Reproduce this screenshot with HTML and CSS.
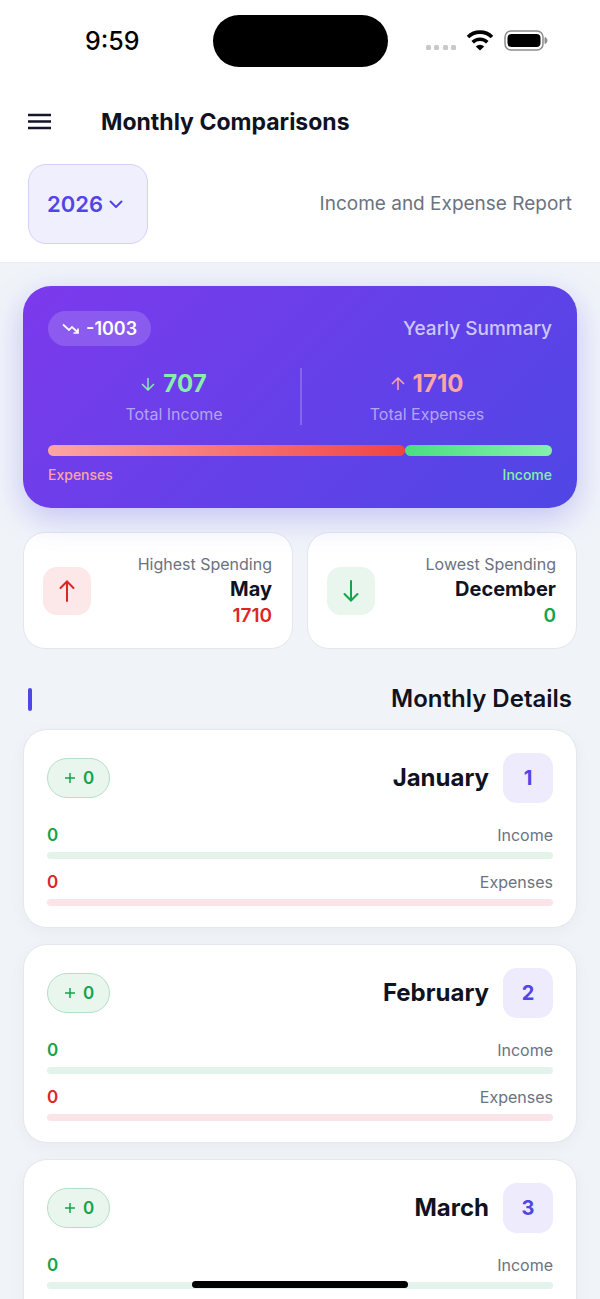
FILE: index.html
```html
<!DOCTYPE html>
<html lang="en">
<head>
<meta charset="utf-8">
<meta name="viewport" content="width=device-width, initial-scale=1">
<title>Monthly Comparisons</title>
<link rel="stylesheet" href="styles.css">
</head>
<body>
<div class="app">
	<div class="status">
		<div class="time">9:59</div>
		<div class="island"></div>
		<div class="signals">
			<svg width="31" height="26" viewBox="0 0 31 26"><g fill="#c8c8c8"><rect x="1" y="17" width="5" height="5" rx="1.500"/><rect x="9" y="17" width="5" height="5" rx="1.500"/><rect x="18" y="17" width="5" height="5" rx="1.500"/><rect x="26" y="17" width="5" height="5" rx="1.500"/></g></svg>
			<svg width="28" height="26" viewBox="0 0 28 26"><g fill="none" stroke="#000" stroke-width="3.6"><path d="M2 9.100a17 17 0 0 1 24 0"/><path d="M6.700 14.200a10.400 10.400 0 0 1 14.600 0"/></g><path d="M14 22.600l-4.200-4.200a6 6 0 0 1 8.400 0z"/></svg>
			<svg width="44" height="26" viewBox="0 0 44 26"><rect x="1" y="3" width="38" height="19" rx="6" fill="none" stroke="#8a8a8a" stroke-width="1.500"/><rect x="3.500" y="6" width="33" height="13" rx="4"/><path d="M41 9.500c2.600 1 2.600 5 0 6z" fill="#8a8a8a" stroke="#8a8a8a"/></svg>
		</div>
	</div>
	<header class="header">
		<div class="titlebar">
			<button class="menu" type="button" aria-label="Menu">
				<svg width="24" height="18" viewBox="0 0 24 18"><path d="M0 2h23M0 8.500h23M0 15h23" stroke="#15152b" stroke-width="2.300"/></svg>
			</button>
			<h1>Monthly Comparisons</h1>
		</div>
		<div class="filter">
			<div class="year">
				<select aria-label="Year">
					<option>2026</option>
				</select>
				<svg class="chevron" width="14" height="9" viewBox="0 0 14 9"><path d="M1.500 1.500L7 7l5.500-5.500" fill="none" stroke="#4f46e5" stroke-width="2" stroke-linecap="round" stroke-linejoin="round"/></svg>
			</div>
			<p>Income and Expense Report</p>
		</div>
	</header>

	<main class="content">
		<section class="summary">
			<div class="summary-top">
				<div class="balance">
					<svg width="18" height="12" viewBox="0 0 18 12"><path d="M1 1.500l6 5.500 3-3 6 5.500M16 5.500v4.500h-4.500" fill="none" stroke="#fff" stroke-width="1.700"/></svg>
					-1003
				</div>
				<h2>Yearly Summary</h2>
			</div>
			<div class="totals">
				<div class="total income">
					<div class="value">
						<svg width="14" height="14" viewBox="0 0 14 14"><path d="M7 1v12M1 7l6 6 6-6" fill="none" stroke="currentColor" stroke-width="1.500"/></svg>
						707
					</div>
					<div class="name">Total Income</div>
				</div>
				<div class="total expense">
					<div class="value">
						<svg width="14" height="14" viewBox="0 0 14 14"><path d="M7 13V1M1 7l6-6 6 6" fill="none" stroke="currentColor" stroke-width="1.500"/></svg>
						1710
					</div>
					<div class="name">Total Expenses</div>
				</div>
			</div>
			<div class="ratio">
				<div class="ratio-expense" style="width:70.75%"></div>
				<div class="ratio-income"></div>
			</div>
			<div class="legend">
				<span class="expense">Expenses</span>
				<span class="income">Income</span>
			</div>
		</section>

		<section class="extremes">
			<div class="extreme">
				<div class="icon red">
					<svg width="16" height="22" viewBox="0 0 16 22"><path d="M8 21V2M1.500 8L8 1.500 14.500 8" fill="none" stroke="#dc2626" stroke-width="2" stroke-linecap="round"/></svg>
				</div>
				<div class="info">
					<div class="label">Highest Spending</div>
					<div class="month">May</div>
					<div class="amount minus">1710</div>
				</div>
			</div>
			<div class="extreme">
				<div class="icon green">
					<svg width="16" height="22" viewBox="0 0 16 22"><path d="M8 1v19M1.500 14L8 20.500 14.500 14" fill="none" stroke="#16a34a" stroke-width="2" stroke-linecap="round"/></svg>
				</div>
				<div class="info">
					<div class="label">Lowest Spending</div>
					<div class="month">December</div>
					<div class="amount plus">0</div>
				</div>
			</div>
		</section>

		<div class="heading">
			<span class="mark"></span>
			<h2>Monthly Details</h2>
		</div>

		<section class="months">
			<article class="card">
				<div class="card-top">
					<div class="net">
						<svg width="10" height="10" viewBox="0 0 10 10"><path d="M5 0v10M0 5h10" stroke="#16a34a" stroke-width="1.500"/></svg>
						0
					</div>
					<h3>January</h3>
					<div class="number">1</div>
				</div>
				<div class="line"><b class="plus">0</b><span>Income</span></div>
				<div class="track green"></div>
				<div class="line"><b class="minus">0</b><span>Expenses</span></div>
				<div class="track red"></div>
			</article>
			<article class="card">
				<div class="card-top">
					<div class="net">
						<svg width="10" height="10" viewBox="0 0 10 10"><path d="M5 0v10M0 5h10" stroke="#16a34a" stroke-width="1.500"/></svg>
						0
					</div>
					<h3>February</h3>
					<div class="number">2</div>
				</div>
				<div class="line"><b class="plus">0</b><span>Income</span></div>
				<div class="track green"></div>
				<div class="line"><b class="minus">0</b><span>Expenses</span></div>
				<div class="track red"></div>
			</article>
			<article class="card">
				<div class="card-top">
					<div class="net">
						<svg width="10" height="10" viewBox="0 0 10 10"><path d="M5 0v10M0 5h10" stroke="#16a34a" stroke-width="1.500"/></svg>
						0
					</div>
					<h3>March</h3>
					<div class="number">3</div>
				</div>
				<div class="line"><b class="plus">0</b><span>Income</span></div>
				<div class="track green"></div>
				<div class="line"><b class="minus">0</b><span>Expenses</span></div>
				<div class="track red"></div>
			</article>
		</section>
	</main>
	<div class="home"></div>
</div>
</body>
</html>
```

FILE: styles.css
```css
*{margin:0;padding:0;box-sizing:border-box;}
body{font-family:Inter,"Liberation Sans",sans-serif;font-size:16px;color:#10121f;background:#f0f4f9;}
svg{display:block;flex:none;}
.app{height:100vh;display:flex;flex-direction:column;overflow:hidden;}

/* status bar */
.status{display:grid;grid-template-columns:1fr 175px 1fr;align-items:center;height:82px;background:#fff;flex:none;}
.time{font-size:25px;line-height:30px;font-weight:500;color:#000;text-align:center;padding-left:12px;}
.island{height:52px;border-radius:26px;background:#000;}
.signals{display:flex;justify-content:flex-end;gap:10px;padding-right:52px;}

/* header */
.header{background:#fff;border-bottom:1px solid #e8ebf0;flex:none;position:relative;z-index:2;}
.titlebar{display:flex;align-items:center;gap:49px;height:80px;padding:0 28px;}
.menu{border:0;background:none;cursor:pointer;}
h1{font-size:23px;line-height:30px;font-weight:700;}
.filter{display:flex;justify-content:space-between;align-items:center;padding:2px 28px 18px;}
.filter p{font-size:19px;line-height:24px;color:#6b7280;}
.year{position:relative;}
.year select{appearance:none;width:120px;height:80px;padding:0 40px 0 18px;border:1px solid #d6d0f5;border-radius:18px;background:#f0effe;font-family:inherit;font-size:22px;font-weight:600;color:#4f46e5;cursor:pointer;}
.chevron{position:absolute;right:25px;top:36px;pointer-events:none;}

.content{flex:1;min-height:0;overflow-y:auto;scrollbar-width:none;padding:23px;}

/* yearly summary */
.summary{position:relative;z-index:1;padding:25px 25px 22px;border-radius:28px;background:linear-gradient(135deg,#7c3aed,#4f46e5);box-shadow:0 10px 32px rgba(79,70,229,.28);}
.summary-top{display:flex;justify-content:space-between;align-items:center;}
.summary h2{font-size:19px;line-height:24px;font-weight:500;color:#cdc7f8;}
.balance{display:flex;align-items:center;gap:6px;height:35px;padding:0 14px;border-radius:18px;background:rgba(255,255,255,.16);font-size:18px;font-weight:600;color:#fff;}
.totals{display:grid;grid-template-columns:1fr 1fr;margin:22px 0 20px;text-align:center;}
.total + .total{border-left:2px solid rgba(255,255,255,.2);}
.value{display:flex;justify-content:center;align-items:center;gap:8px;font-size:24px;line-height:32px;font-weight:700;}
.name{margin-top:4px;font-size:16px;line-height:21px;color:#b3a5f3;}
.income{color:#86efac;}
.expense{color:#fca5a5;}
.ratio{display:flex;height:11px;}
.ratio-expense{border-radius:6px;background:linear-gradient(90deg,#fca5a5,#ef4444);}
.ratio-income{flex:1;border-radius:6px;background:linear-gradient(90deg,#4ade80,#86efac);}
.legend{display:flex;justify-content:space-between;margin-top:8px;font-size:14px;line-height:22px;font-weight:500;}

/* highest and lowest month */
.extremes{display:grid;grid-template-columns:1fr 1fr;gap:14px;margin-top:24px;}
.extreme{display:flex;justify-content:space-between;align-items:center;padding:20px 20px 20px 19px;border:1px solid #e3e6ef;border-radius:22px;background:#fff;}
.icon{display:flex;justify-content:center;align-items:center;width:48px;height:48px;border-radius:14px;}
.red{background:#fce8e8;}
.green{background:#e8f6ed;}
.info{text-align:right;}
.label{font-size:16px;line-height:22px;color:#6b7280;}
.month{font-size:20px;line-height:28px;font-weight:700;}
.amount{font-size:19px;line-height:25px;font-weight:600;}
.plus{color:#16a34a;}
.minus{color:#dc2626;}

.heading{display:flex;justify-content:space-between;align-items:center;margin:36px 0 16px;padding:0 5px;}
.heading h2{font-size:24px;line-height:28px;font-weight:600;}
.mark{width:4px;height:23px;border-radius:2px;background:#4f46e5;}

/* month cards */
.months{display:grid;gap:16px;}
.card{padding:23px 23px 21px;border:1px solid #e3e7ee;border-radius:24px;background:#fff;box-shadow:0 4px 16px rgba(0,0,0,.04);}
.card-top{display:flex;align-items:center;margin-bottom:22px;}
.net{display:flex;align-items:center;gap:8px;height:40px;padding:0 15px 0 17px;border:1px solid #b5dfc6;border-radius:20px;background:#e8f6ed;font-size:17px;font-weight:600;color:#16a34a;}
.card h3{margin-left:auto;font-size:24px;line-height:28px;font-weight:700;}
.number{width:50px;height:50px;margin-left:14px;border-radius:14px;background:#eeebfd;font-size:20px;line-height:50px;font-weight:700;text-align:center;color:#4f46e5;}
.line{display:flex;justify-content:space-between;font-size:16px;line-height:20px;color:#6b7280;}
.line b{font-size:17px;font-weight:600;}
.track{height:7px;margin-top:7px;border-radius:4px;}
.track.green{background:#e3f3ea;}
.track.red{background:#fae4e8;}
.track + .line{margin-top:13px;}

.home{position:fixed;left:50%;bottom:11px;width:36%;height:7px;border-radius:4px;background:#000;transform:translateX(-50%);}
```
